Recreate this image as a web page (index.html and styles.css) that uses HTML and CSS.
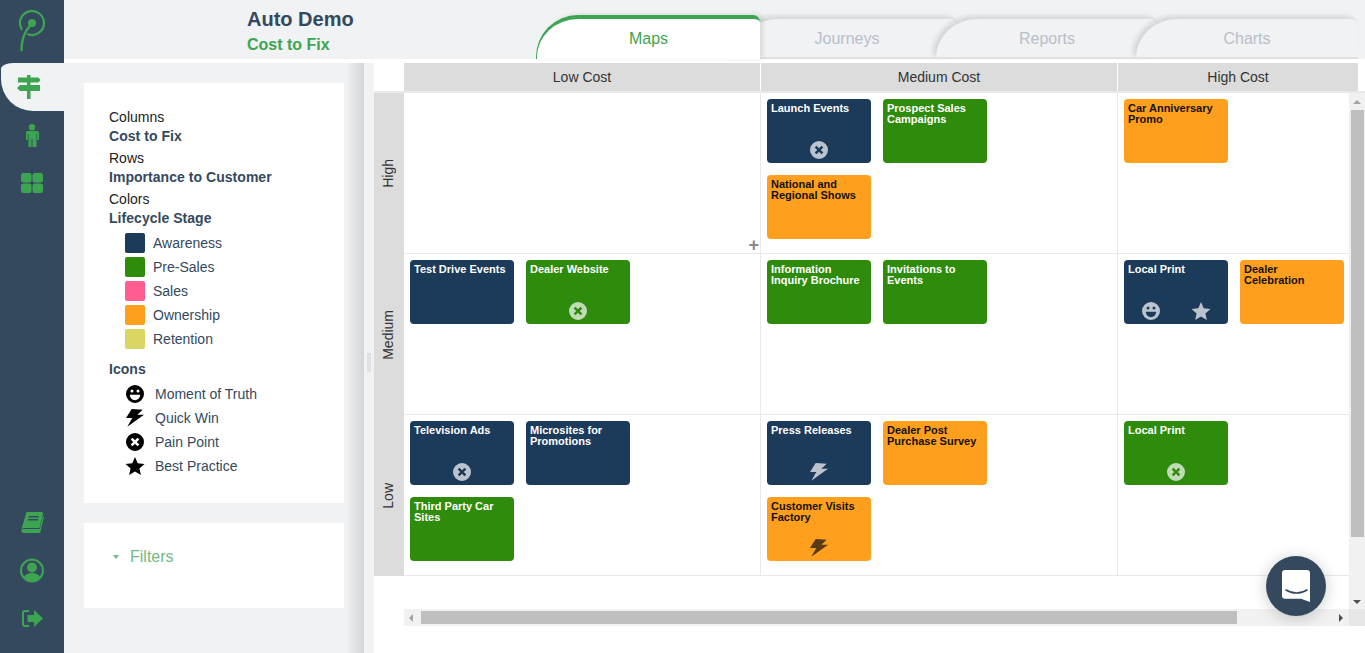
FILE: index.html
```html
<!DOCTYPE html>
<html lang="en">
<head>
<meta charset="utf-8">
<title>Auto Demo</title>
<link rel="stylesheet" href="styles.css">
</head>
<body>
<svg class="defs" width="0" height="0" aria-hidden="true">
  <symbol id="i-smile" viewBox="0 0 20 20"><path fill-rule="evenodd" d="M10 1a9 9 0 1 1 0 18a9 9 0 0 1 0-18zM7 5.500a1.500 1.500 0 1 0 0 3a1.500 1.500 0 0 0 0-3zM13 5.500a1.500 1.500 0 1 0 0 3a1.500 1.500 0 0 0 0-3zM4.800 10.800c.2 3.200 2.400 5.400 5.200 5.400s5-2.200 5.200-5.400z"/></symbol>
  <symbol id="i-bolt" viewBox="0 0 20 20"><path d="M6.700 1L17.700 1.700L12.300 6.700H19L2.300 18.700L7.300 10H1Z"/></symbol>
  <symbol id="i-x" viewBox="0 0 20 20"><path fill-rule="evenodd" d="M10 1a9 9 0 1 1 0 18a9 9 0 0 1 0-18zM7.500 5.700L5.700 7.500L8.200 10L5.700 12.500L7.500 14.300L10 11.800L12.500 14.300L14.300 12.500L11.800 10L14.300 7.500L12.500 5.700L10 8.200z"/></symbol>
  <symbol id="i-star" viewBox="0 0 20 20"><path d="M10 1L12.700 7.300L19.500 7.900L14.400 12.400L15.900 19L10 15.500L4.100 19L5.600 12.400L.5 7.900L7.300 7.300Z"/></symbol>
</svg>
<div class="app">
  <nav class="rail">
    <svg class="logo" width="30" height="42" viewBox="0 0 30 42"><path d="M4.600 19A12 12 0 1 1 11 24.300" fill="none" stroke="#3da552" stroke-width="2.200" stroke-linecap="round"/><circle cx="15" cy="13" r="4" fill="#3da552"/><path d="M13.500 15C8 21 4.500 28 4.500 40" fill="none" stroke="#3da552" stroke-width="2.400" stroke-linecap="round"/></svg>
    <div class="rail-active">
      <svg width="24" height="24" viewBox="0 0 24 24"><path fill="#3da552" d="M10 0h3.500v24H10z"/><path fill="#3da552" d="M1 2.500h20.500l2 2.500-2 2.500H1zM3 10h20v6H3l-3-3z"/></svg>
    </div>
    <svg class="rail-icon person" width="14" height="23" viewBox="0 0 14 23"><circle cx="7" cy="3.200" r="3.200" fill="#3da552"/><path fill="#3da552" d="M2 7h10a2 2 0 0 1 2 2v7h-1.800V10h-.7v13H7.500v-8h-1v8H3.500V10h-.7v6H1v-7a2 2 0 0 1 1-2z"/></svg>
    <svg class="rail-icon" width="22" height="20" viewBox="0 0 22 20"><rect width="10.500" height="9.500" rx="2.500" fill="#3da552"/><rect x="11.500" width="10.500" height="9.500" rx="2.500" fill="#3da552"/><rect y="10.500" width="10.500" height="9.500" rx="2.500" fill="#3da552"/><rect x="11.500" y="10.500" width="10.500" height="9.500" rx="2.500" fill="#3da552"/></svg>
    <div class="rail-bottom">
      <svg width="23" height="21" viewBox="0 0 23 21"><path fill="#3da552" d="M5.500 0H20.500a1.500 1.500 0 0 1 1.500 2L18.500 16H3L.5 17z"/><path fill="#3da552" d="M23 4.500L19.500 19.500a2 2 0 0 1-2 1.500H2.500A2.300 2.300 0 0 1 .3 18.500a2.500 2.500 0 0 1 2.700-1.500H18.800L21.800 4.500z"/><path fill="#34495e" d="M7.800 4h10.200l-.4 1.500H7.400zM7 7h10.200l-.4 1.500H6.600z"/></svg>
      <svg width="24" height="25" viewBox="0 0 24 25"><circle cx="12" cy="12.500" r="11" fill="none" stroke="#3da552" stroke-width="2"/><circle cx="12" cy="9.500" r="5" fill="#3da552"/><path fill="#3da552" d="M4 19.500c1-3 4-4.500 8-4.500s7 1.500 8 4.500a11 11 0 0 1-16 0z"/></svg>
      <svg class="exit" width="21" height="17" viewBox="0 0 21 17"><path fill="none" stroke="#3da552" stroke-width="2" d="M7 1H3a2 2 0 0 0-2 2v11a2 2 0 0 0 2 2h4"/><path fill="#3da552" d="M5.500 5H12V0l9 8.500-9 8.500v-5H5.500z"/></svg>
    </div>
  </nav>
  <div class="main">
    <header class="topbar">
      <div class="titles">
        <div class="title">Auto Demo</div>
        <div class="subtitle">Cost to Fix</div>
      </div>
      <div class="tabs">
        <div class="tab active">Maps</div>
        <div class="tab">Journeys</div>
        <div class="tab">Reports</div>
        <div class="tab">Charts</div>
      </div>
    </header>
    <div class="content">
      <aside class="panel">
        <section class="card legend">
          <div class="lbl">Columns</div>
          <div class="val">Cost to Fix</div>
          <div class="lbl">Rows</div>
          <div class="val">Importance to Customer</div>
          <div class="lbl">Colors</div>
          <div class="val">Lifecycle Stage</div>
          <ul class="swatches">
            <li><span class="sw navy"></span>Awareness</li>
            <li><span class="sw green"></span>Pre-Sales</li>
            <li><span class="sw pink"></span>Sales</li>
            <li><span class="sw orange"></span>Ownership</li>
            <li><span class="sw yellow"></span>Retention</li>
          </ul>
          <div class="val icons-h">Icons</div>
          <ul class="iconlist">
            <li><svg><use href="#i-smile"/></svg>Moment of Truth</li>
            <li><svg><use href="#i-bolt"/></svg>Quick Win</li>
            <li><svg><use href="#i-x"/></svg>Pain Point</li>
            <li><svg><use href="#i-star"/></svg>Best Practice</li>
          </ul>
        </section>
        <section class="card filters"><span class="caret"></span>Filters</section>
      </aside>
      <div class="splitter"><span class="grip"></span></div>
      <div class="board">
        <div class="heads">
          <div class="corner"></div>
          <div class="head c1">Low Cost</div>
          <div class="head c2">Medium Cost</div>
          <div class="head c3">High Cost</div>
        </div>
        <div class="scrollarea">
          <div class="rows">
            <div class="row r1">
              <div class="rowhead"><span>High</span></div>
              <div class="cell c1"><span class="plus">+</span></div>
              <div class="cell c2">
                <div class="tile navy">Launch Events<div class="tile-icons"><svg><use href="#i-x"/></svg></div></div>
                <div class="tile green">Prospect Sales Campaigns</div>
                <div class="tile orange">National and Regional Shows</div>
              </div>
              <div class="cell c3">
                <div class="tile orange">Car Anniversary Promo</div>
              </div>
            </div>
            <div class="row r2">
              <div class="rowhead"><span>Medium</span></div>
              <div class="cell c1">
                <div class="tile navy">Test Drive Events</div>
                <div class="tile green">Dealer Website<div class="tile-icons"><svg><use href="#i-x"/></svg></div></div>
              </div>
              <div class="cell c2">
                <div class="tile green">Information Inquiry Brochure</div>
                <div class="tile green">Invitations to Events</div>
              </div>
              <div class="cell c3">
                <div class="tile navy">Local Print<div class="tile-icons two"><svg><use href="#i-smile"/></svg><svg><use href="#i-star"/></svg></div></div>
                <div class="tile orange">Dealer Celebration</div>
              </div>
            </div>
            <div class="row r3">
              <div class="rowhead"><span>Low</span></div>
              <div class="cell c1">
                <div class="tile navy">Television Ads<div class="tile-icons"><svg><use href="#i-x"/></svg></div></div>
                <div class="tile navy">Microsites for Promotions</div>
                <div class="tile green">Third Party Car Sites</div>
              </div>
              <div class="cell c2">
                <div class="tile navy">Press Releases<div class="tile-icons"><svg><use href="#i-bolt"/></svg></div></div>
                <div class="tile orange">Dealer Post Purchase Survey</div>
                <div class="tile orange">Customer Visits Factory<div class="tile-icons"><svg><use href="#i-bolt"/></svg></div></div>
              </div>
              <div class="cell c3">
                <div class="tile green">Local Print<div class="tile-icons"><svg><use href="#i-x"/></svg></div></div>
              </div>
            </div>
          </div>
          <div class="vbar"><span class="arr up"></span><span class="thumb"></span><span class="arr down"></span></div>
        </div>
        <div class="hbar"><span class="arr left"></span><span class="thumb"></span><span class="arr right"></span><span class="hcorner"></span></div>
      </div>
    </div>
  </div>
</div>
<button class="chat" aria-label="Chat"><svg width="28" height="32" viewBox="0 0 28 32"><path fill="#fff" d="M3 0h22a3 3 0 0 1 3 3v29l-9-3.300H3a3 3 0 0 1-3-3V3a3 3 0 0 1 3-3z"/><path fill="none" stroke="#34495e" stroke-width="1.600" stroke-linecap="round" d="M4 20c6 4 15 4 21 0"/></svg></button>
</body>
</html>
```
FILE: styles.css
```css
* { box-sizing: border-box; }
html, body { margin: 0; padding: 0; height: 100%; overflow: hidden; }
body { font-family: "Liberation Sans", Arial, sans-serif; background: #fff; color: #222; }
.defs { position: absolute; }
ul { list-style: none; margin: 0; padding: 0; }
.app { display: flex; height: 653px; }

.rail { width: 64px; flex: none; background: #34495e; display: flex; flex-direction: column; align-items: center; }
.logo { margin-top: 10px; margin-bottom: 11px; flex: none; }
.rail-active { width: 64px; height: 48px; background: #f0f2f4; border-radius: 12px 0 0 32px / 6px 0 0 32px; margin-left: 1px; display: flex; align-items: center; justify-content: center; padding-right: 7px; flex: none; }
.rail-icon { flex: none; margin-top: 13px; }
.rail-icon + .rail-icon { margin-top: 26px; }
.rail-bottom { margin-top: auto; margin-bottom: 26px; display: flex; flex-direction: column; align-items: center; gap: 25px; }
.rail-bottom svg { display: block; }
.rail-bottom .exit { margin-top: 2px; }

.main { flex: 1; min-width: 0; display: flex; flex-direction: column; }
.topbar { height: 59px; background: #f0f2f4; position: relative; flex: none; margin-bottom: 4px; }
.titles { position: absolute; left: 183px; top: 6px; }
.title { font-size: 20px; font-weight: 700; color: #34495e; line-height: 26px; }
.subtitle { font-size: 16px; font-weight: 700; color: #3da552; line-height: 22px; margin-top: 2px; }
.tabs { position: absolute; left: 472px; top: 15px; display: flex; height: 44px; }
.tab { width: 222px; height: 40px; margin-top: 4px; margin-right: -22px; background: #f0f2f4; border-radius: 41px 8px 0 0 / 39px 8px 0 0; border-bottom: 2px solid #dfe1e5; box-shadow: -3px -3px 5px rgba(0,0,0,.12); color: #b9bfc9; font-size: 16px; line-height: 40px; text-align: center; position: relative; }
.tab.active { width: 224px; height: 44px; margin-top: 0; margin-right: -24px; background: #fff; border: 0; border-top: 4px solid #3da552; border-left: 1px solid #3da552; border-radius: 42px 7px 0 0 / 42px 7px 0 0; color: #3da552; box-shadow: 3px -1px 5px rgba(0,0,0,.1); z-index: 5; }

.content { flex: 1; display: flex; min-height: 0; }
.panel { width: 300px; flex: none; background: linear-gradient(to right, #f0f2f4 calc(100% - 18px), #d3d5d8); padding: 20px 20px 0; display: flex; flex-direction: column; gap: 20px; }
.card { background: #fff; width: 260px; }
.legend { height: 420px; padding: 25px 25px 0; font-size: 14px; }
.lbl { line-height: 19px; color: #222; }
.val { line-height: 19px; font-weight: 700; color: #34495e; margin-bottom: 3px; letter-spacing: .04px; }
.swatches { margin: 2px 0 0 16px; }
.swatches li { display: flex; align-items: center; height: 24px; color: #34495e; gap: 8px; }
.sw { width: 20px; height: 20px; border-radius: 2px; flex: none; }
.sw.navy { background: #1c3a5a; }
.sw.green { background: #2e8b0c; }
.sw.pink { background: #ff5c90; }
.sw.orange { background: #ff9f1e; }
.sw.yellow { background: #dbd563; }
.icons-h { margin-top: 9px; }
.iconlist { margin: 1px 0 0 16px; }
.iconlist li { display: flex; align-items: center; height: 24px; color: #34495e; gap: 10px; }
.iconlist svg { width: 20px; height: 20px; flex: none; fill: #000; }
.filters { height: 85px; padding: 24px 0 0 46px; font-size: 16px; line-height: 20px; color: #6fbb82; position: relative; }
.caret { position: absolute; left: 29px; top: 32px; border-style: solid; border-width: 4px 3.500px 0; border-color: #6fbb82 transparent transparent; }

.splitter { width: 10px; flex: none; background: #f0f2f4; position: relative; }
.grip { position: absolute; left: 3px; top: 290px; width: 4px; height: 19px; background: #dfe1e5; }

.board { flex: 1; min-width: 0; display: flex; flex-direction: column; background: #fff; }
.heads { display: flex; height: 30px; flex: none; gap: 1px; border-bottom: 2px solid #e9e9e9; }
.corner { width: 29px; }
.head { background: #dcdcdc; font-size: 14px; line-height: 28px; text-align: center; color: #333; height: 28px; }
.head.c1 { width: 356px; }
.head.c2 { width: 356px; }
.head.c3 { width: 240px; }

.scrollarea { display: flex; height: 516px; flex: none; }
.rows { width: 975px; flex: none; }
.row { display: flex; height: 161px; border-bottom: 1px solid #e9e9e9; }
.rowhead { width: 30px; flex: none; background: #dcdcdc; display: flex; align-items: center; justify-content: center; margin-bottom: -1px; padding-right: 2px; }
.rowhead span { writing-mode: vertical-rl; transform: rotate(180deg); font-size: 14px; color: #333; }
.cell { padding: 6px; display: grid; grid-template-columns: 104px 104px; grid-auto-rows: 64px; gap: 12px; align-content: start; position: relative; border-right: 1px solid #e9e9e9; }
.cell.c1, .cell.c2 { width: 357px; flex: none; }
.cell.c3 { flex: 1 1 0; min-width: 0; border-right: 0; }
.plus { position: absolute; right: 1px; bottom: -1px; font-size: 18px; line-height: 18px; font-weight: 700; color: #888; }

.tile { position: relative; border-radius: 4px; font-size: 11px; font-weight: 700; line-height: 11px; padding: 4px 4px 0; }
.tile.navy { background: #1c3a5a; color: #fff; }
.tile.green { background: #2e8b0c; color: #fff; }
.tile.orange { background: #ff9f1e; color: #111; }
.tile-icons { position: absolute; left: 0; right: 0; bottom: 3px; height: 20px; display: flex; justify-content: center; }
.tile-icons svg { width: 20px; height: 20px; fill: currentColor; opacity: .7; }
.tile.orange .tile-icons svg { fill: #111; }
.tile-icons.two { justify-content: space-between; padding: 0 17px; }

.vbar { width: 16px; flex: none; background: #f1f1f1; height: 516px; display: flex; flex-direction: column; align-items: center; }
.vbar .thumb { width: 13px; height: 427px; background: #bfbfbf; margin-left: 1px; }
.hbar { margin-left: 30px; width: 961px; height: 17px; flex: none; background: #f1f1f1; display: flex; align-items: center; }
.hbar .thumb { width: 816px; height: 13px; background: #bfbfbf; margin-left: 3px; }
.hcorner { width: 16px; height: 17px; background: #e6e6e6; flex: none; }
.arr { flex: none; display: block; width: 0; height: 0; border-style: solid; }
.arr.up { margin: 7px 0 6px; border-width: 0 4px 4px; border-color: transparent transparent #a3a3a3; }
.arr.down { margin-top: auto; margin-bottom: 5px; border-width: 4px 4px 0; border-color: #505050 transparent transparent; }
.arr.left { margin-left: 5px; margin-right: 5px; border-width: 4px 4px 4px 0; border-color: transparent #a3a3a3 transparent transparent; }
.arr.right { margin-left: auto; margin-right: 6px; border-width: 4px 0 4px 4px; border-color: transparent transparent transparent #505050; }

.chat { position: fixed; left: 1266px; top: 556px; width: 60px; height: 60px; border-radius: 50%; background: #34495e; border: 0; padding: 0; box-shadow: 0 2px 16px rgba(0,0,0,.2); display: flex; align-items: center; justify-content: center; }
```
